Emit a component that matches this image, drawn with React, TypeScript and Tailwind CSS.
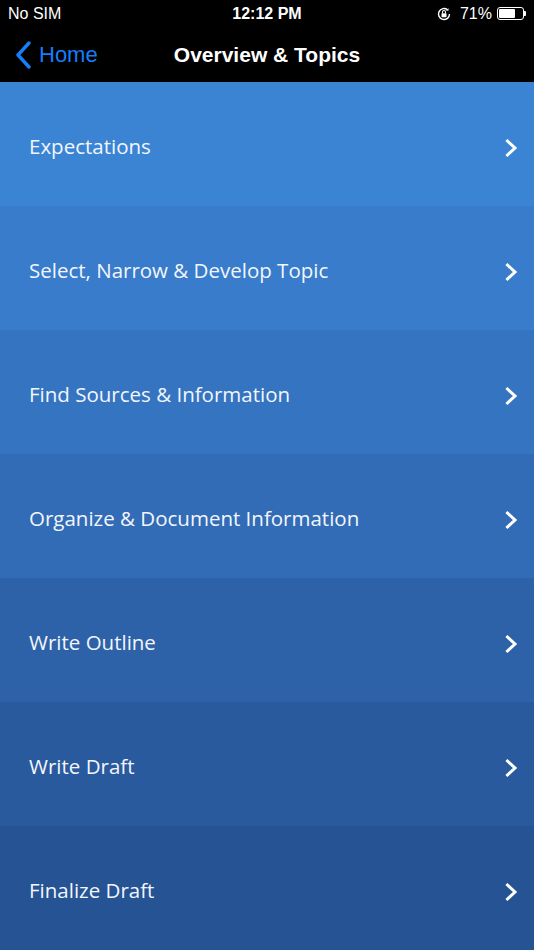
const topics = [
  { label: "Expectations", bg: "bg-[#3b84d4]" },
  { label: "Select, Narrow & Develop Topic", bg: "bg-[#387ccb]" },
  { label: "Find Sources & Information", bg: "bg-[#3574c1]" },
  { label: "Organize & Document Information", bg: "bg-[#326cb6]" },
  { label: "Write Outline", bg: "bg-[#2e62a8]" },
  { label: "Write Draft", bg: "bg-[#2a5a9e]" },
  { label: "Finalize Draft", bg: "bg-[#255393]" },
]

function StatusBar() {
  return (
    <div className="h-[28px] flex items-center justify-between px-[8px] text-white text-[16px] font-['Liberation_Sans',sans-serif] relative">
      <span>No SIM</span>
      <span className="absolute left-1/2 -translate-x-1/2 font-semibold">12:12 PM</span>
      <div className="flex items-center gap-[5px]">
        <svg width="16" height="16" viewBox="0 0 16 16" className="mr-[3px]">
          <path d="M13.5 8a5.5 5.5 0 1 1-2-4.2" fill="none" stroke="white" strokeWidth="1.4" />
          <path d="M12.6 2.2l-0.2 2.6-2.6-0.3z" fill="white" />
          <rect x="5.5" y="7.2" width="5" height="4" rx="0.6" fill="white" />
          <path d="M6.5 7.2V6a1.5 1.5 0 0 1 3 0v1.2" fill="none" stroke="white" strokeWidth="1.1" />
        </svg>
        <span>71%</span>
        <div className="flex items-center">
          <div className="w-[27px] h-[13px] border border-white rounded-[3px] p-[1px]">
            <div className="h-full w-[71%] bg-white rounded-[1px]" />
          </div>
          <div className="w-[2px] h-[5px] bg-white rounded-r-[1px]" />
        </div>
      </div>
    </div>
  )
}

function NavBar() {
  return (
    <div className="h-[55px] flex items-center relative font-['Liberation_Sans',sans-serif]">
      <div className="flex items-center pl-[14px] text-[#157efb]">
        <svg width="20" height="28" viewBox="0 0 20 28">
          <path d="M15 2L4 14l11 12" fill="none" stroke="#157efb" strokeWidth="3.4" strokeLinecap="round" strokeLinejoin="round" />
        </svg>
        <span className="text-[22px] ml-[5px]">Home</span>
      </div>
      <span className="absolute left-1/2 -translate-x-1/2 text-white text-[21px] font-bold">Overview &amp; Topics</span>
    </div>
  )
}

function Chevron() {
  return (
    <svg width="15" height="20" viewBox="0 0 15 20" className="mt-[4px]">
      <path d="M3.5 3L11 10l-7.5 7" fill="none" stroke="white" strokeWidth="3" strokeLinecap="square" strokeLinejoin="miter" />
    </svg>
  )
}

export default function App() {
  return (
    <div className="w-[534px] h-[950px] overflow-hidden bg-black flex flex-col">
      <StatusBar />
      <NavBar />
      <div className="flex flex-col">
        {topics.map((t) => (
          <div key={t.label} className={`${t.bg} h-[124px] shrink-0 flex items-center justify-between pl-[29px] pr-[15px] pt-[4px]`}>
            <span className="text-[20.5px] text-[#f2f6fc] font-['Open_Sans',sans-serif]">{t.label}</span>
            <Chevron />
          </div>
        ))}
      </div>
    </div>
  )
}
